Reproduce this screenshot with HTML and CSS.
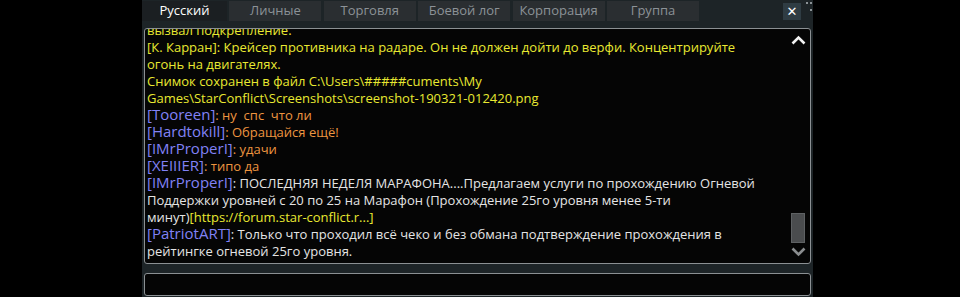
FILE: index.html
```html
<!DOCTYPE html>
<html lang="ru">
<head>
<meta charset="utf-8">
<link rel="stylesheet" href="styles.css">
</head>
<body>
<div class="panel">
  <div class="tabbar">
    <div class="tab active">Русский</div>
    <div class="tab">Личные</div>
    <div class="tab">Торговля</div>
    <div class="tab">Боевой лог</div>
    <div class="tab">Корпорация</div>
    <div class="tab">Группа</div>
    <div class="spacer"></div>
    <div class="close">✕</div>
    <div class="grip"><i></i><i></i><i></i></div>
  </div>
  <div class="chat">
    <div class="log">
      <div class="content">
        <div class="msg sys">вызвал подкрепление.</div>
        <div class="msg sys">[К. Карран]: Крейсер противника на радаре. Он не должен дойти до верфи. Концентрируйте<br>огонь на двигателях.</div>
        <div class="msg sys">Снимок сохранен в файл C:\Users\#####cuments\My<br>Games\StarConflict\Screenshots\screenshot-190321-012420.png</div>
        <div class="msg priv"><span class="name">[Tooreen]</span>: ну&nbsp; спс&nbsp; что ли</div>
        <div class="msg priv"><span class="name">[Hardtokill]</span>: Обращайся ещё!</div>
        <div class="msg priv"><span class="name">[IMrProperI]</span>: удачи</div>
        <div class="msg priv"><span class="name">[XEIIIER]</span>: типо да</div>
        <div class="msg pub"><span class="name">[IMrProperI]</span>: ПОСЛЕДНЯЯ НЕДЕЛЯ МАРАФОНА....Предлагаем услуги по прохождению Огневой<br>Поддержки уровней с 20 по 25 на Марафон (Прохождение 25го уровня менее 5-ти<br>минут)<span class="link">[https://forum.star-conflict.r...]</span></div>
        <div class="msg pub"><span class="name">[PatriotART]</span>: Только что проходил всё чеко и без обмана подтверждение прохождения в<br>рейтингке огневой 25го уровня.</div>
      </div>
    </div>
    <div class="scrollbar">
      <svg class="arrow up" width="15" height="10" viewBox="0 0 15 10"><path d="M1.5 8.5 L7.5 2.5 L13.5 8.5" fill="none" stroke="#f2f2f2" stroke-width="2.6"/></svg>
      <div class="track"><div class="thumb"></div></div>
      <svg class="arrow down" width="15" height="10" viewBox="0 0 15 10"><path d="M1.5 1.5 L7.5 7.5 L13.5 1.5" fill="none" stroke="#8a8d8f" stroke-width="2.6"/></svg>
    </div>
  </div>
  <div class="input"></div>
</div>
</body>
</html>
```

FILE: styles.css
```css
html, body {
  margin: 0;
  padding: 0;
  background: #000;
  height: 297px;
  overflow: hidden;
}
body {
  font-family: "Open Sans", "Noto Sans", sans-serif;
}
.panel {
  margin-left: 142px;
  width: 671px;
  height: 297px;
  background: #1d2427;
  display: flex;
  flex-direction: column;
  overflow: hidden;
}
.tabbar {
  height: 22px;
  display: flex;
  align-items: flex-start;
  padding-top: 1px;
}
.tab {
  width: 92px;
  height: 20px;
  margin-right: 2.4px;
  background: #2a2e31;
  color: #8c9297;
  font-size: 13px;
  line-height: 19px;
  text-align: center;
  flex: none;
}
.tab.active {
  width: 85px;
  background: #1b1f22;
  color: #ffffff;
}
.spacer { flex: 1; }
.close {
  width: 18px;
  height: 17px;
  margin-top: 2px;
  background: #2f3c43;
  color: #ffffff;
  font-family: "DejaVu Sans", sans-serif;
  font-weight: bold;
  font-size: 13px;
  line-height: 17px;
  text-align: center;
}
.grip {
  width: 12px;
  position: relative;
  height: 12px;
}
.grip i {
  position: absolute;
  width: 2px;
  height: 2px;
  background: #8b9296;
}
.grip i:nth-child(1) { left: 5px; top: 1px; }
.grip i:nth-child(2) { left: 9px; top: 1px; }
.grip i:nth-child(3) { left: 9px; top: 8px; }
.chat {
  margin: 5px 2px 0 2px;
  height: 234px;
  border: 1px solid #8b9093;
  border-radius: 3px;
  background: #050505;
  display: flex;
  overflow: hidden;
}
.log {
  flex: 1;
  overflow: hidden;
  padding-left: 2px;
}
.content {
  margin-top: -7px;
  font-size: 13px;
  line-height: 17px;
  color: #e8e8e8;
  white-space: nowrap;
}
.msg.sys { color: #e9e931; }
.msg.priv { color: #ee9540; }
.msg.pub { color: #e4e4e4; }
.name {
  color: #8182f6;
  font-size: 15px;
  line-height: 0;
}
.link { color: #e9e931; }
.scrollbar {
  width: 18px;
  margin-right: 3px;
  display: flex;
  flex-direction: column;
  align-items: center;
  padding: 6px 0 6px;
}
.arrow { flex: none; }
.track {
  flex: 1;
  display: flex;
  flex-direction: column;
  justify-content: flex-end;
  align-items: center;
  padding-bottom: 4px;
}
.thumb {
  width: 12px;
  height: 28px;
  background: #4a4c4e;
  border: 1px solid #5e6163;
}
.input {
  margin: 9px 2px 0 2px;
  height: 21px;
  border: 1px solid #8b9093;
  border-radius: 3px;
  background: #050505;
}
```
